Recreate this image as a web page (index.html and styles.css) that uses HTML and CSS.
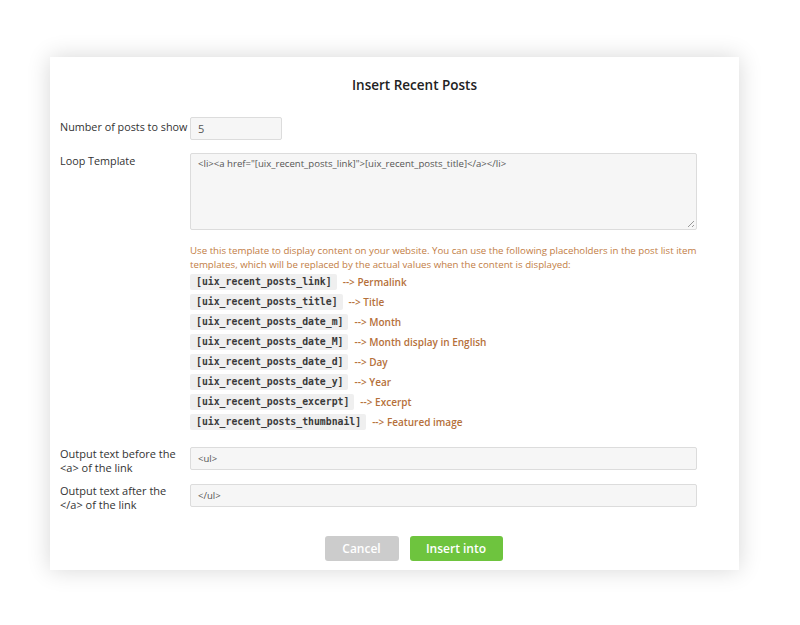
FILE: index.html
```html
<!DOCTYPE html>
<html>
<head>
<meta charset="utf-8">
<link rel="stylesheet" href="styles.css">
</head>
<body>
<div class="dialog">
  <h1 class="title">Insert Recent Posts</h1>
  <div class="form">
    <div class="row row-num">
      <label class="label">Number of posts to show</label>
      <div class="field"><div class="input input-small">5</div></div>
    </div>
    <div class="row row-loop">
      <label class="label">Loop Template</label>
      <div class="field">
        <div class="textarea">&lt;li&gt;&lt;a href="[uix_recent_posts_link]"&gt;[uix_recent_posts_title]&lt;/a&gt;&lt;/li&gt;<span class="grip"></span></div>
        <p class="help">Use this template to display content on your website. You can use the following placeholders in the post list item templates, which will be replaced by the actual values when the content is displayed:</p>
        <ul class="codes">
          <li><code>[uix_recent_posts_link]</code><span class="arrow">--&gt; Permalink</span></li>
          <li><code>[uix_recent_posts_title]</code><span class="arrow">--&gt; Title</span></li>
          <li><code>[uix_recent_posts_date_m]</code><span class="arrow">--&gt; Month</span></li>
          <li><code>[uix_recent_posts_date_M]</code><span class="arrow">--&gt; Month display in English</span></li>
          <li><code>[uix_recent_posts_date_d]</code><span class="arrow">--&gt; Day</span></li>
          <li><code>[uix_recent_posts_date_y]</code><span class="arrow">--&gt; Year</span></li>
          <li><code>[uix_recent_posts_excerpt]</code><span class="arrow">--&gt; Excerpt</span></li>
          <li><code>[uix_recent_posts_thumbnail]</code><span class="arrow">--&gt; Featured image</span></li>
        </ul>
      </div>
    </div>
    <div class="row row-before">
      <label class="label label-two">Output text before the<br>&lt;a&gt; of the link</label>
      <div class="field"><div class="input">&lt;ul&gt;</div></div>
    </div>
    <div class="row row-after">
      <label class="label label-two">Output text after the<br>&lt;/a&gt; of the link</label>
      <div class="field"><div class="input">&lt;/ul&gt;</div></div>
    </div>
  </div>
  <div class="actions">
    <button class="btn btn-cancel">Cancel</button>
    <button class="btn btn-insert">Insert into</button>
  </div>
</div>
</body>
</html>
```
FILE: styles.css
```css
html, body {
  margin: 0;
  padding: 0;
  background: #ffffff;
}
body {
  font-family: "Open Sans", "Noto Sans", sans-serif;
  color: #333333;
  padding-bottom: 50px;
}
.dialog {
  box-sizing: border-box;
  margin: 57px 0 0 50px;
  width: 689px;
  height: 513px;
  background: #ffffff;
  box-shadow: 0 0 22px rgba(0, 0, 0, 0.16);
  padding: 0 10px;
  display: flex;
  flex-direction: column;
}
.title {
  margin: 18px 0 0 0;
  padding-left: 40px;
  text-align: center;
  font-size: 13.5px;
  line-height: 20px;
  font-weight: 600;
  color: #222;
}
.form {
  display: flex;
  flex-direction: column;
  width: 637px;
}
.row {
  display: grid;
  grid-template-columns: 130px 507px;
}
.row-num { margin-top: 22px; }
.row-loop { margin-top: 13px; }
.row-before { margin-top: 15px; }
.row-after { margin-top: 9px; }
.label {
  font-size: 10.8px;
  line-height: 15px;
  color: #333;
  white-space: nowrap;
}
.row-num .label { padding-top: 2px; }
.row-loop .label { padding-top: 0; }
.label-two {
  font-size: 11px;
  line-height: 14px;
}
.input {
  box-sizing: border-box;
  height: 23px;
  background: #f6f6f6;
  border: 1px solid #dcdcdc;
  border-radius: 2px;
  font-size: 9.5px;
  line-height: 21px;
  padding: 0 7px;
  color: #555;
}
.input-small {
  width: 92px;
  font-size: 11px;
}
.textarea {
  position: relative;
  box-sizing: border-box;
  height: 77px;
  background: #f6f6f6;
  border: 1px solid #dcdcdc;
  border-radius: 2px;
  font-size: 9.6px;
  line-height: 14px;
  padding: 3px 7px;
  color: #555;
}
.grip {
  position: absolute;
  right: 2px;
  bottom: 2px;
  width: 6px;
  height: 6px;
  background: linear-gradient(135deg, transparent 45%, #999 45%, #999 55%, transparent 55%, transparent 75%, #999 75%, #999 85%, transparent 85%);
}
.help {
  margin: 14px 0 0 0;
  font-size: 9.7px;
  line-height: 14px;
  color: #c27d45;
}
.codes {
  list-style: none;
  margin: 0;
  padding: 0;
}
.codes li {
  height: 20px;
  display: flex;
  align-items: center;
}
.codes code {
  font-family: "DejaVu Sans Mono", "Liberation Mono", monospace;
  font-weight: bold;
  font-size: 9.8px;
  line-height: 16px;
  background: #efefef;
  color: #3a3a3a;
  padding: 0 5px 0 6px;
  border-radius: 2px;
}
.arrow {
  margin-left: 6px;
  font-size: 10px;
  font-weight: 600;
  color: #b5703a;
}
.actions {
  margin-top: 24px;
  padding-left: 38px;
  display: flex;
  justify-content: center;
  gap: 11px;
}
.btn {
  border: none;
  height: 25px;
  border-radius: 3px;
  font-family: "Open Sans", "Noto Sans", sans-serif;
  font-size: 12px;
  font-weight: 600;
  color: #ffffff;
  padding: 0;
}
.btn-cancel {
  width: 74px;
  background: #cccccc;
}
.btn-insert {
  width: 93px;
  background: #6ec43e;
}
```
